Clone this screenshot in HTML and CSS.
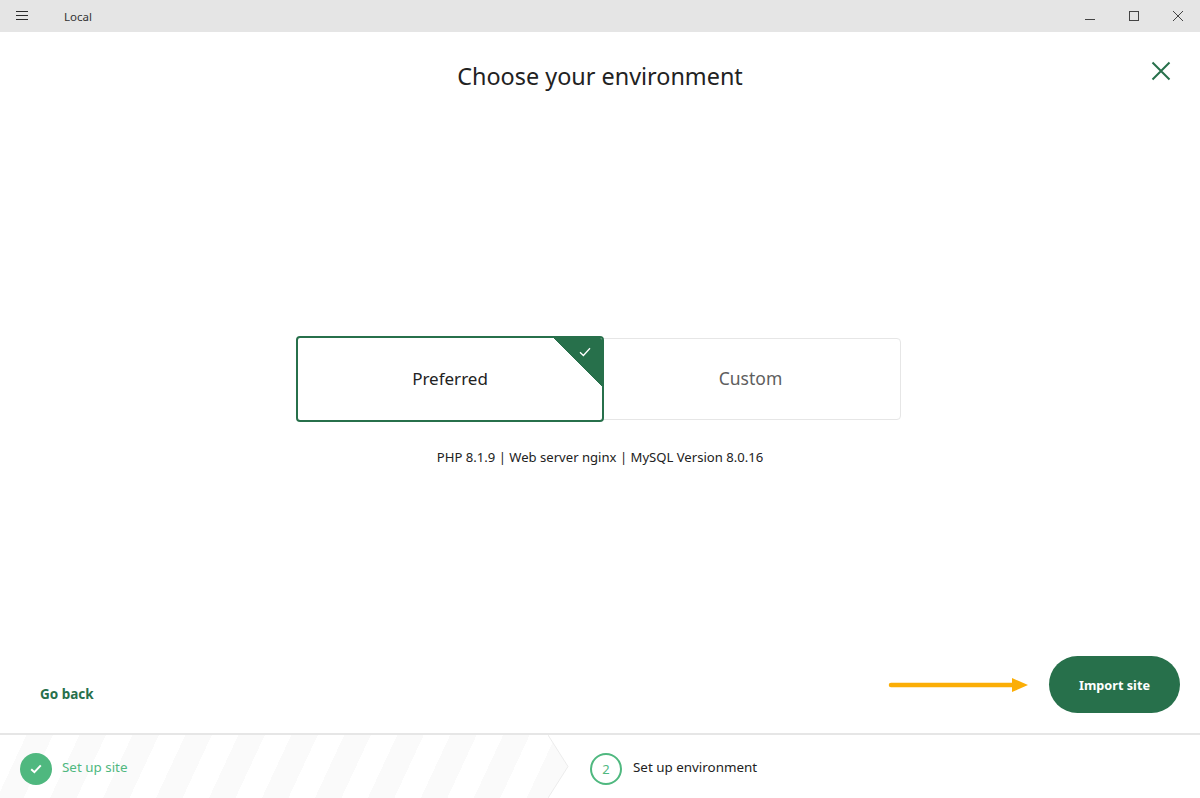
FILE: index.html
```html
<!DOCTYPE html>
<html lang="en">
<head>
<meta charset="utf-8">
<title>Local</title>
<link rel="stylesheet" href="styles.css">
</head>
<body>
<div class="app">
  <header class="titlebar">
    <div class="titlebar-left">
      <svg class="menu-icon" width="12" height="10" viewBox="0 0 12 10"><path d="M0 .5h12M0 4.5h12M0 8.5h12" stroke="#2b2b2b" fill="none"/></svg>
      <span class="app-name">Local</span>
    </div>
    <div class="window-controls">
      <span class="win-btn"><svg width="10" height="10" viewBox="0 0 10 10"><path d="M0 8.5h10" stroke="#444" fill="none"/></svg></span>
      <span class="win-btn"><svg width="10" height="10" viewBox="0 0 10 10"><rect x=".5" y=".5" width="9" height="9" stroke="#444" fill="none"/></svg></span>
      <span class="win-btn"><svg width="10" height="10" viewBox="0 0 10 10"><path d="M0 0l10 10M10 0L0 10" stroke="#444" fill="none"/></svg></span>
    </div>
  </header>

  <main class="content">
    <button class="close-btn" aria-label="Close">
      <svg width="20" height="20" viewBox="0 0 20 20"><path d="M1.5 1.5l17 17M18.5 1.5l-17 17" stroke="#27704b" stroke-width="2" fill="none"/></svg>
    </button>
    <h1 class="title">Choose your environment</h1>
    <section class="chooser">
      <div class="cards">
        <div class="card card-selected">
          <span class="corner"><svg class="corner-check" width="12" height="10" viewBox="0 0 12 10"><path d="M1 5.2l3.4 3.3L11 1.2" stroke="#fff" stroke-width="1.3" fill="none"/></svg></span>
          Preferred
        </div>
        <div class="card card-other">Custom</div>
      </div>
      <p class="summary">PHP 8.1.9 | Web server nginx | MySQL Version 8.0.16</p>
    </section>
    <div class="actions">
      <a class="back-link">Go back</a>
      <div class="action-right">
        <svg class="arrow" width="142" height="16" viewBox="0 0 142 16"><path d="M3 8h124" stroke="#fbae06" stroke-width="4.5" stroke-linecap="round" fill="none"/><path d="M124 1l16 7-16 7z" fill="#fbae06"/></svg>
        <button class="primary-btn">Import site</button>
      </div>
    </div>
  </main>

  <footer class="stepper">
    <div class="step step-done">
      <span class="step-badge badge-done"><svg width="12" height="10" viewBox="0 0 12 10"><path d="M1.2 5.2l3.2 3L10.8 1.4" stroke="#fff" stroke-width="2" fill="none"/></svg></span>
      <span class="step-label">Set up site</span>
      <svg class="chevron" width="22" height="63" viewBox="0 0 22 63"><path d="M0 0l20 31.500L0 63H22V0z" fill="#fff"/><path d="M0 0l20 31.500L0 63" stroke="#ececec" fill="none"/></svg>
    </div>
    <div class="step step-current">
      <span class="step-badge badge-current">2</span>
      <span class="step-label">Set up environment</span>
    </div>
  </footer>
</div>
</body>
</html>
```
FILE: styles.css
```css
* { box-sizing: border-box; }
html, body { margin: 0; height: 100%; }
body {
  font-family: "Noto Sans", "Open Sans", sans-serif;
  color: #1f1f1f;
  background: #fff;
  overflow: hidden;
}
.app { height: 798px; display: flex; flex-direction: column; }

.titlebar {
  height: 32px;
  flex: none;
  background: #e5e5e5;
  display: flex;
  justify-content: space-between;
  align-items: center;
}
.titlebar-left { display: flex; align-items: center; padding-left: 16px; }
.menu-icon { margin-right: 36px; }
.app-name { font-size: 11.500px; color: #333; }
.window-controls { display: flex; }
.win-btn { width: 44px; height: 32px; display: flex; align-items: center; justify-content: center; }

.content { flex: 1; position: relative; display: flex; flex-direction: column; min-height: 0; }
.close-btn {
  position: absolute; top: 29px; right: 29px;
  width: 20px; height: 20px; padding: 0; border: 0; background: none; display: flex;
}
.title {
  margin: 26px 0 0;
  height: 36px;
  text-align: center;
  font-size: 23.400px;
  line-height: 36px;
  font-weight: 400;
  color: #222;
}
.chooser {
  margin-top: 242px;
  display: flex;
  flex-direction: column;
  align-items: center;
}
.cards { display: flex; align-items: center; height: 86px; margin-left: -3px; }
.card {
  display: flex; align-items: center; justify-content: center;
  font-size: 17px;
  padding-bottom: 2px;
}
.card-selected {
  position: relative;
  z-index: 1;
  width: 308px; height: 86px;
  border: 2px solid #27704b;
  border-radius: 4px;
  background: #fff;
  color: #222;
  overflow: hidden;
}
.corner {
  position: absolute; top: -1px; right: -1px;
  width: 50px; height: 50px;
  background: linear-gradient(to top right, transparent 50%, #27704b 50%);
}
.corner-check { position: absolute; top: 10px; right: 12px; }
.card-other {
  width: 301px; height: 82px;
  margin-left: -4px;
  border: 1px solid #e6e6e6;
  border-radius: 0 4px 4px 0;
  color: #5e5e5e;
  font-size: 17.500px;
}
.summary { margin: 25px 0 0; font-size: 13.100px; line-height: 20px; color: #222; }

.actions {
  margin-top: auto;
  height: 77px;
  padding: 0 20px 20px 40px;
  display: flex; justify-content: space-between; align-items: center;
}
.back-link { font-size: 13.500px; font-weight: 700; color: #27704b; padding-top: 19px; }
.action-right { display: flex; align-items: center; gap: 19px; }
.arrow { margin-top: 1px; }
.primary-btn {
  width: 131px; height: 57px;
  border: 0; border-radius: 29px;
  background: #27704b; color: #fff;
  font-family: inherit;
  font-weight: 700;
  font-size: 12.700px;
}

.stepper {
  height: 65px; flex: none;
  border-top: 2px solid #e6e6e6;
  display: flex;
}
.step { display: flex; align-items: center; padding-top: 4px; }
.step-done {
  position: relative;
  width: 570px;
  padding-left: 20px;
  background: repeating-linear-gradient(115deg, #fff 0 24px, #fafafa 24px 48px);
}
.chevron { position: absolute; right: 0; top: 0; }
.step-current { flex: 1; padding-left: 20px; }
.step-badge {
  width: 32px; height: 32px; border-radius: 50%;
  display: flex; align-items: center; justify-content: center;
  flex: none;
  font-size: 13px;
  margin-right: 10px;
}
.badge-done { background: #4fb87f; }
.badge-current { border: 2px solid #4fb87f; color: #4fb87f; margin-right: 11px; }
.step-label { font-size: 13.400px; margin-top: -3px; }
.step-done .step-label { color: #4fb87f; }
.step-current .step-label { color: #222; }
```
